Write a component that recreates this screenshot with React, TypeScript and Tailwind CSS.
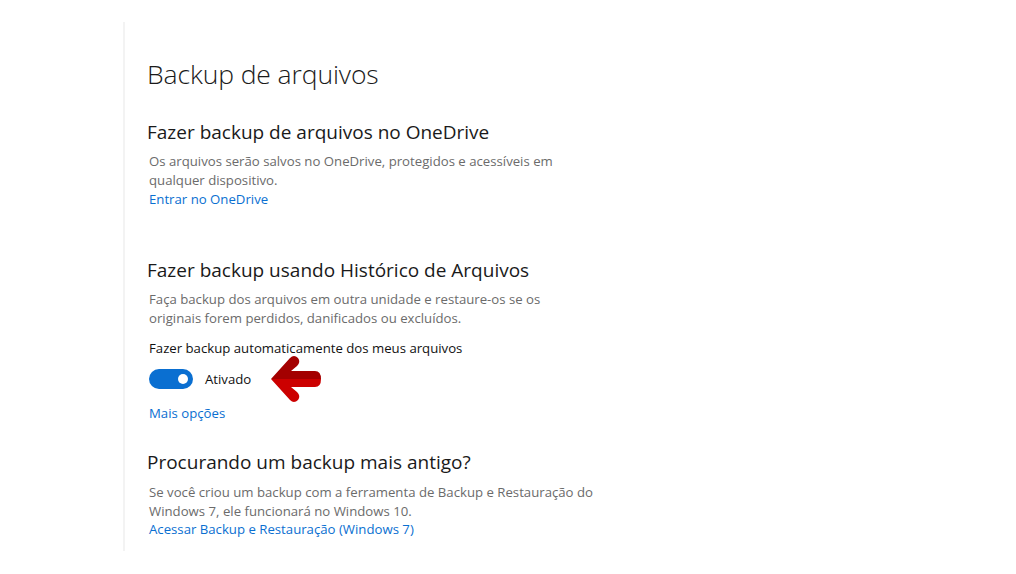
import React from "react";

const font = { fontFamily: '"Open Sans", "Noto Sans", sans-serif' };

function Arrow() {
  return (
    <svg width="52" height="54" viewBox="0 0 52 54" className="absolute left-[270px] top-[352px]">
      <path d="M1 27 L20 6 Q24 2 28 6 Q31 10 27 14 L21 19 L45 19 Q51 19 51 27 L1 27 Z" fill="#a30000" />
      <path d="M1 27 L20 48 Q24 52 28 48 Q31 44 27 40 L21 35 L45 35 Q51 35 51 27 L1 27 Z" fill="#cc0000" />
    </svg>
  );
}

export default function App() {
  return (
    <div className="relative w-[1016px] h-[574px] bg-white" style={font}>
      <div className="absolute left-[123px] top-[22px] w-[2px] h-[529px] bg-[#f3f3f3]" />
      <div className="pl-[147px] pt-[56px]">
        <h1 className="text-[26.5px] leading-[36px] font-light text-[#1a1a1a] tracking-[-0.1px]">Backup de arquivos</h1>

        <h2 className="mt-[27px] text-[19px] leading-[26px] text-[#1a1a1a]">Fazer backup de arquivos no OneDrive</h2>
        <div className="mt-[7px] pl-[2px] text-[13.2px] leading-[19px] text-[#6b6b6b]">
          <p>Os arquivos serão salvos no OneDrive, protegidos e acessíveis em<br />qualquer dispositivo.</p>
          <p className="text-[#0a6fd1]">Entrar no OneDrive</p>
        </div>

        <h2 className="mt-[48px] text-[19px] leading-[26px] text-[#1a1a1a]">Fazer backup usando Histórico de Arquivos</h2>
        <div className="mt-[7px] pl-[2px] text-[13.2px] leading-[19px] text-[#6b6b6b]">
          <p>Faça backup dos arquivos em outra unidade e restaure-os se os<br />originais forem perdidos, danificados ou excluídos.</p>
        </div>
        <p className="mt-[11px] pl-[2px] text-[13.2px] leading-[19px] text-[#111]">Fazer backup automaticamente dos meus arquivos</p>
        <div className="mt-[11px] pl-[2px] flex items-center gap-[12px]">
          <div className="w-[44px] h-[20px] rounded-full bg-[#0a6fd1] flex items-center justify-end pr-[5px]">
            <div className="w-[10px] h-[10px] rounded-full bg-white" />
          </div>
          <span className="text-[13.2px] leading-[19px] text-[#111]">Ativado</span>
        </div>
        <p className="mt-[15px] pl-[2px] text-[13.2px] leading-[19px] text-[#0a6fd1]">Mais opções</p>

        <h2 className="mt-[26px] text-[19px] leading-[26px] text-[#1a1a1a]">Procurando um backup mais antigo?</h2>
        <div className="mt-[8px] pl-[2px] text-[13.2px] leading-[18.5px] text-[#6b6b6b]">
          <p>Se você criou um backup com a ferramenta de Backup e Restauração do<br />Windows 7, ele funcionará no Windows 10.</p>
          <p className="text-[#0a6fd1]">Acessar Backup e Restauração (Windows 7)</p>
        </div>
      </div>
      <Arrow />
    </div>
  );
}
